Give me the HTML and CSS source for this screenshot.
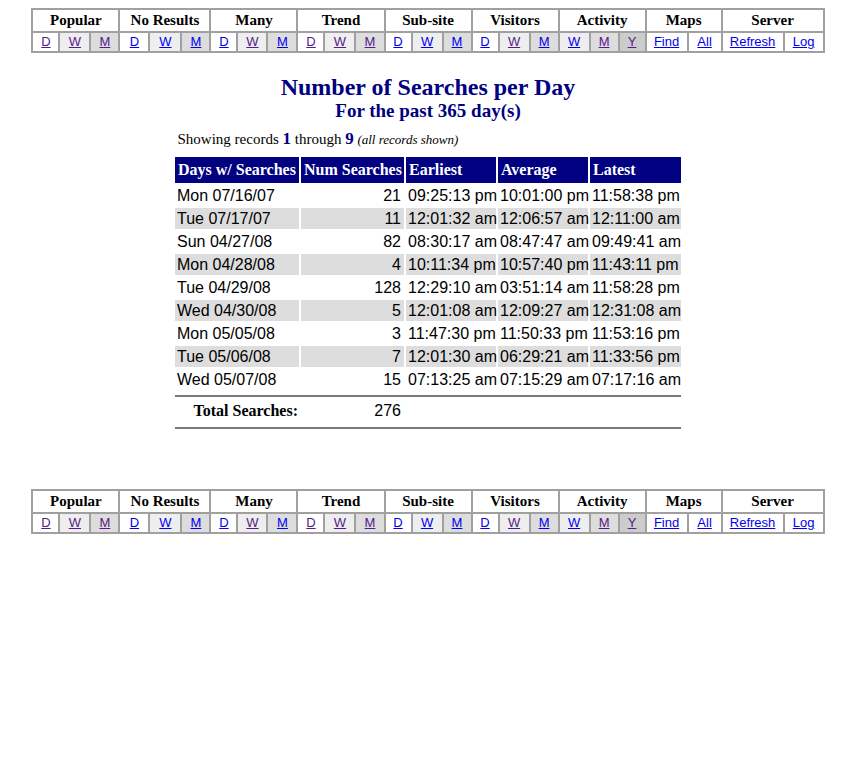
FILE: index.html
```html
<!DOCTYPE html>
<html>
<head>
<meta charset="utf-8">
<title>Number of Searches per Day</title>
<link rel="stylesheet" href="styles.css">
</head>
<body>
<table class="nav">
<colgroup><col><col><col><col><col><col><col><col><col><col><col><col><col><col><col><col><col><col><col><col><col><col><col><col><col></colgroup>
<tr>
<th colspan="3">Popular</th><th colspan="3">No Results</th><th colspan="3">Many</th><th colspan="3">Trend</th><th colspan="3">Sub-site</th><th colspan="3">Visitors</th><th colspan="3">Activity</th><th colspan="2">Maps</th><th colspan="2">Server</th>
</tr>
<tr>
<td class="bd"><a href="#" class="v">D</a></td><td class="bw"><a href="#" class="v">W</a></td><td class="bm"><a href="#" class="v">M</a></td>
<td class="bd"><a href="#">D</a></td><td class="bw"><a href="#">W</a></td><td class="bm"><a href="#">M</a></td>
<td class="bd"><a href="#">D</a></td><td class="bw"><a href="#" class="v">W</a></td><td class="bm"><a href="#">M</a></td>
<td class="bd"><a href="#" class="v">D</a></td><td class="bw"><a href="#" class="v">W</a></td><td class="bm"><a href="#" class="v">M</a></td>
<td class="bd"><a href="#">D</a></td><td class="bw"><a href="#">W</a></td><td class="bm"><a href="#">M</a></td>
<td class="bd"><a href="#">D</a></td><td class="bw"><a href="#" class="v">W</a></td><td class="bm"><a href="#">M</a></td>
<td class="bw"><a href="#">W</a></td><td class="bm"><a href="#" class="v">M</a></td><td class="by"><a href="#" class="v">Y</a></td>
<td class="bd"><a href="#">Find</a></td><td class="bd"><a href="#">All</a></td>
<td class="bd"><a href="#">Refresh</a></td><td class="bd"><a href="#">Log</a></td>
</tr>
</table>

<h1 class="title">Number of Searches per Day</h1>
<h2 class="subtitle">For the past 365 day(s)</h2>

<p class="showing">Showing records <b>1</b> through <b>9</b> <i>(all records shown)</i></p>

<table class="data">
<colgroup><col><col><col><col><col></colgroup>
<thead>
<tr><th>Days w/ Searches</th><th>Num Searches</th><th>Earliest</th><th>Average</th><th>Latest</th></tr>
</thead>
<tbody>
<tr><td>Mon 07/16/07</td><td class="num">21</td><td>09:25:13 pm</td><td>10:01:00 pm</td><td>11:58:38 pm</td></tr>
<tr class="alt"><td>Tue 07/17/07</td><td class="num">11</td><td>12:01:32 am</td><td>12:06:57 am</td><td>12:11:00 am</td></tr>
<tr><td>Sun 04/27/08</td><td class="num">82</td><td>08:30:17 am</td><td>08:47:47 am</td><td>09:49:41 am</td></tr>
<tr class="alt"><td>Mon 04/28/08</td><td class="num">4</td><td>10:11:34 pm</td><td>10:57:40 pm</td><td>11:43:11 pm</td></tr>
<tr><td>Tue 04/29/08</td><td class="num">128</td><td>12:29:10 am</td><td>03:51:14 am</td><td>11:58:28 pm</td></tr>
<tr class="alt"><td>Wed 04/30/08</td><td class="num">5</td><td>12:01:08 am</td><td>12:09:27 am</td><td>12:31:08 am</td></tr>
<tr><td>Mon 05/05/08</td><td class="num">3</td><td>11:47:30 pm</td><td>11:50:33 pm</td><td>11:53:16 pm</td></tr>
<tr class="alt"><td>Tue 05/06/08</td><td class="num">7</td><td>12:01:30 am</td><td>06:29:21 am</td><td>11:33:56 pm</td></tr>
<tr><td>Wed 05/07/08</td><td class="num">15</td><td>07:13:25 am</td><td>07:15:29 am</td><td>07:17:16 am</td></tr>
</tbody>
<tfoot>
<tr class="rule first"><td colspan="5"></td></tr>
<tr class="total"><td class="label">Total Searches:</td><td class="num">276</td><td colspan="3"></td></tr>
<tr class="rule"><td colspan="5"></td></tr>
</tfoot>
</table>

<table class="nav nav-bottom">
<colgroup><col><col><col><col><col><col><col><col><col><col><col><col><col><col><col><col><col><col><col><col><col><col><col><col><col></colgroup>
<tr>
<th colspan="3">Popular</th><th colspan="3">No Results</th><th colspan="3">Many</th><th colspan="3">Trend</th><th colspan="3">Sub-site</th><th colspan="3">Visitors</th><th colspan="3">Activity</th><th colspan="2">Maps</th><th colspan="2">Server</th>
</tr>
<tr>
<td class="bd"><a href="#" class="v">D</a></td><td class="bw"><a href="#" class="v">W</a></td><td class="bm"><a href="#" class="v">M</a></td>
<td class="bd"><a href="#">D</a></td><td class="bw"><a href="#">W</a></td><td class="bm"><a href="#">M</a></td>
<td class="bd"><a href="#">D</a></td><td class="bw"><a href="#" class="v">W</a></td><td class="bm"><a href="#">M</a></td>
<td class="bd"><a href="#" class="v">D</a></td><td class="bw"><a href="#" class="v">W</a></td><td class="bm"><a href="#" class="v">M</a></td>
<td class="bd"><a href="#">D</a></td><td class="bw"><a href="#">W</a></td><td class="bm"><a href="#">M</a></td>
<td class="bd"><a href="#">D</a></td><td class="bw"><a href="#" class="v">W</a></td><td class="bm"><a href="#">M</a></td>
<td class="bw"><a href="#">W</a></td><td class="bm"><a href="#" class="v">M</a></td><td class="by"><a href="#" class="v">Y</a></td>
<td class="bd"><a href="#">Find</a></td><td class="bd"><a href="#">All</a></td>
<td class="bd"><a href="#">Refresh</a></td><td class="bd"><a href="#">Log</a></td>
</tr>
</table>
</body>
</html>
```

FILE: styles.css
```css
html, body {
  background: #ffffff;
}
body {
  margin: 8px;
  font-family: "Liberation Serif", "Times New Roman", serif;
  color: #000000;
}

/* ---------- navigation bar ---------- */
.nav {
  margin: 0 auto;
  width: 793px;
  table-layout: fixed;
  border-collapse: separate;
  border-spacing: 0;
  border: 1px solid #a0a0a0;
}
.nav th,
.nav td {
  border: 1px solid #a0a0a0;
  padding: 0;
  text-align: center;
  white-space: nowrap;
}
.nav th {
  font: bold 15px/21px "Liberation Serif", "Times New Roman", serif;
  background: #ffffff;
}
.nav td {
  font: 13px/18px "Liberation Sans", Arial, sans-serif;
}
.nav a {
  color: #0000ee;
  text-decoration: underline;
}
.nav a.v {
  color: #551a8b;
}
.nav .bd { background: #ffffff; }
.nav .bw { background: #eeeeee; }
.nav .bm { background: #dddddd; }
.nav .by { background: #cccccc; }

.nav col:nth-child(1)  { width: 27px; }
.nav col:nth-child(2)  { width: 31px; }
.nav col:nth-child(3)  { width: 29px; }
.nav col:nth-child(4)  { width: 30px; }
.nav col:nth-child(5)  { width: 32px; }
.nav col:nth-child(6)  { width: 29px; }
.nav col:nth-child(7)  { width: 27px; }
.nav col:nth-child(8)  { width: 30px; }
.nav col:nth-child(9)  { width: 30px; }
.nav col:nth-child(10) { width: 27px; }
.nav col:nth-child(11) { width: 31px; }
.nav col:nth-child(12) { width: 29px; }
.nav col:nth-child(13) { width: 27px; }
.nav col:nth-child(14) { width: 31px; }
.nav col:nth-child(15) { width: 29px; }
.nav col:nth-child(16) { width: 27px; }
.nav col:nth-child(17) { width: 31px; }
.nav col:nth-child(18) { width: 29px; }
.nav col:nth-child(19) { width: 31px; }
.nav col:nth-child(20) { width: 29px; }
.nav col:nth-child(21) { width: 27px; }
.nav col:nth-child(22) { width: 42px; }
.nav col:nth-child(23) { width: 34px; }
.nav col:nth-child(24) { width: 62px; }
.nav col:nth-child(25) { width: 40px; }

.nav-bottom {
  margin-top: 58px;
}

/* ---------- headings ---------- */
.title {
  margin: 20px 0 0;
  font: bold 24px/28px "Liberation Serif", "Times New Roman", serif;
  color: #000080;
  text-align: center;
}
.subtitle {
  margin: 0;
  font: bold 19px/20px "Liberation Serif", "Times New Roman", serif;
  color: #000080;
  text-align: center;
}

.showing {
  width: 505px;
  box-sizing: border-box;
  margin: 9px auto 7px;
  padding-left: 2px;
  font: 15px/18px "Liberation Serif", "Times New Roman", serif;
  height: 18px;
}
.showing b {
  font-size: 17px;
  line-height: 15px;
  color: #000080;
}
.showing i {
  font-size: 13px;
  line-height: 15px;
}

/* ---------- data table ---------- */
.data {
  margin: 0 auto;
  width: 510px;
  table-layout: fixed;
  border-collapse: separate;
  border-spacing: 2px;
}
.data col:nth-child(1) { width: 124px; }
.data col:nth-child(2) { width: 103px; }
.data col:nth-child(3) { width: 90px; }
.data col:nth-child(4) { width: 90px; }
.data col:nth-child(5) { width: 91px; }

.data th {
  background: #000080;
  color: #ffffff;
  font: bold 16px/20px "Liberation Serif", "Times New Roman", serif;
  text-align: left;
  padding: 3px 2px 3px 3px;
  white-space: nowrap;
  overflow: visible;
}
.data td {
  font: 16px/19px "Liberation Sans", Arial, sans-serif;
  padding: 1px 3px 1px 2px;
  white-space: nowrap;
  overflow: visible;
}
.data tr.alt td {
  background: #dddddd;
}
.data td.num {
  text-align: right;
}

.data tr.rule td {
  padding: 0;
  height: 0;
  line-height: 0;
  font-size: 0;
  border-bottom: 2px solid #7a7a7a;
}
.data tr.rule.first td {
  padding-top: 3px;
}
.data tr.total td {
  line-height: 22px;
  padding-top: 1px;
  padding-bottom: 3px;
}
.data tr.total td.label {
  font: bold 16px/22px "Liberation Serif", "Times New Roman", serif;
  text-align: right;
  padding-right: 1px;
}
```
